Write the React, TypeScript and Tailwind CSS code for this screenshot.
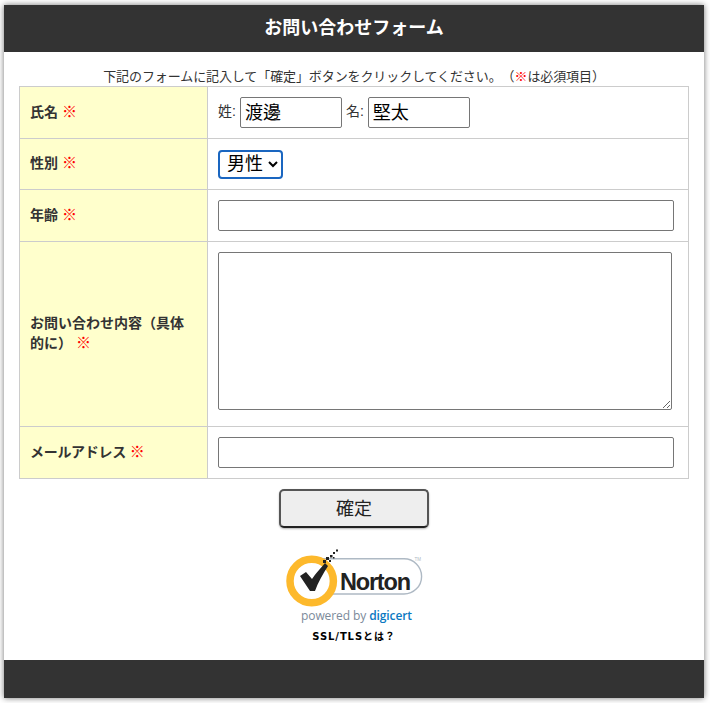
const jp = '"Liberation Sans", "Noto Sans CJK JP", sans-serif';

const Req = () => <span className="text-[#f00] text-[15px] leading-none font-normal">※</span>;

const rowLabel = "bg-[#ffffcc] border border-[#cccccc] px-[10px] pb-[2px] text-left align-middle text-[14px] leading-[20px] font-bold text-[#333333]";
const rowField = "border border-[#cccccc] px-[10px] align-middle text-[14px] text-[#333333]";
const boxInput = "bg-white border border-[#767676] rounded-[2px] text-black text-[18px] px-[4px] pb-[3px] outline-none";

const NortonLogo = () => (
    <svg width="140" height="60" viewBox="0 0 140 60" className="block">
        <path d="M38 10.8 H119 A17.6 17.6 0 0 1 119 46 H38" fill="#ffffff" stroke="#aeb9c4" strokeWidth="1.4" />
        <circle cx="26.7" cy="33" r="21.7" fill="#ffffff" stroke="#fdb92c" strokeWidth="7.5" />
        <path d="M15 28 L21 24 L27 31 C31 25 35 21 40 15 L43 18 C38 26 33 34 30 43 L25 43 Z" fill="#222222" />
        <g fill="#222222">
            <rect x="38" y="12" width="3" height="3" />
            <rect x="41" y="9" width="3" height="3" />
            <rect x="44" y="12" width="2" height="2" />
            <rect x="45" y="7" width="2.5" height="2.5" />
            <rect x="48" y="9" width="1.5" height="1.5" />
            <rect x="48" y="4" width="2" height="2" />
            <rect x="51" y="1.5" width="2" height="2" />
        </g>
        <text x="55" y="41.7" fontFamily='"Liberation Sans", sans-serif' fontWeight="700" fontSize="23.5" letterSpacing="-1.2" fill="#222222">Norton</text>
        <text x="129.5" y="12.5" fontFamily='"Liberation Sans", sans-serif' fontSize="4.5" fill="#aeb9c4">TM</text>
    </svg>
);

export default function App() {
    return (
        <div className="h-[703px] w-[710px] overflow-hidden bg-white pt-[5px] pl-[4px] [text-spacing-trim:space-all]" style={{ fontFamily: jp }}>
            <div className="w-[700px] h-[693px] bg-white flex flex-col shadow-[0_0_6px_rgba(0,0,0,0.55)]">
                <h1 className="h-[47px] shrink-0 bg-[#333333] text-white text-[18px] font-bold flex items-center justify-center">
                    お問い合わせフォーム
                </h1>

                <div className="flex-1 px-[15px]">
                    <p className="mt-[15px] h-[19px] text-center text-[13px] leading-[19px] tracking-[-0.1px] text-[#333333] whitespace-nowrap">
                        下記のフォームに記入して「確定」ボタンをクリックしてください。（<span className="text-[#f00]">※</span>は必須項目）
                    </p>

                    <table className="w-[670px] border-collapse table-fixed">
                        <colgroup>
                            <col className="w-[188px]" />
                            <col />
                        </colgroup>
                        <tbody>
                            <tr className="h-[52px]">
                                <th className={rowLabel}>氏名 <Req /></th>
                                <td className={rowField}>
                                    <div className="flex items-center">
                                        <span className="mr-[4px] pb-[2px]">姓:</span>
                                        <input className={`${boxInput} w-[102px] h-[31px]`} defaultValue="渡邊" />
                                        <span className="ml-[4px] mr-[4px] pb-[2px]">名:</span>
                                        <input className={`${boxInput} w-[102px] h-[31px]`} defaultValue="堅太" />
                                    </div>
                                </td>
                            </tr>
                            <tr className="h-[51px]">
                                <th className={rowLabel}>性別 <Req /></th>
                                <td className={rowField}>
                                    <select className="block h-[29px] w-[65px] bg-white border-2 border-[#1a66c0] rounded-[4px] text-black text-[18px] pl-[3px] outline-none" defaultValue="男性">
                                        <option>男性</option>
                                        <option>女性</option>
                                    </select>
                                </td>
                            </tr>
                            <tr className="h-[52px]">
                                <th className={rowLabel}>年齢 <Req /></th>
                                <td className={rowField}>
                                    <input className={`${boxInput} block w-[456px] h-[31px]`} />
                                </td>
                            </tr>
                            <tr className="h-[185px]">
                                <th className={rowLabel}>お問い合わせ内容（具体<br />的に） <Req /></th>
                                <td className={rowField}>
                                    <textarea className={`${boxInput} block w-[454px] h-[158px] mb-[6px]`} />
                                </td>
                            </tr>
                            <tr className="h-[52px]">
                                <th className={rowLabel}><span className="tracking-[-0.3px]">メールアドレス</span> <Req /></th>
                                <td className={rowField}>
                                    <input className={`${boxInput} block w-[456px] h-[31px]`} />
                                </td>
                            </tr>
                        </tbody>
                    </table>

                    <div className="mt-[10px] flex justify-center">
                        <button className="w-[150px] h-[39px] bg-[#eeeeee] border-2 border-[#555555] border-b-[#222222] rounded-[5px] text-[18px] pt-[1px] text-[#222222] shadow-[0_1px_2px_rgba(0,0,0,0.3)]">
                            確定
                        </button>
                    </div>

                    <div className="mt-[20px] flex flex-col items-center">
                        <div className="ml-[2px]">
                            <NortonLogo />
                        </div>
                        <p className="-mt-[1px] ml-[5px] h-[17px] text-[12px] leading-[17px] tracking-[-0.1px] whitespace-nowrap" style={{ fontFamily: '"Open Sans", sans-serif' }}>
                            <span className="text-[#7b8a9a]">powered by </span>
                            <span className="text-[#0a78c2] font-semibold">digicert</span>
                        </p>
                        <p className="mt-[6px] text-[10px] leading-[14px] font-bold text-black tracking-[0.9px] whitespace-nowrap" style={{ fontFamily: '"DejaVu Sans", "Noto Sans CJK JP", sans-serif' }}>SSL/TLSとは？</p>
                    </div>
                </div>

                <div className="h-[38px] shrink-0 bg-[#333333]" />
            </div>
        </div>
    );
}
